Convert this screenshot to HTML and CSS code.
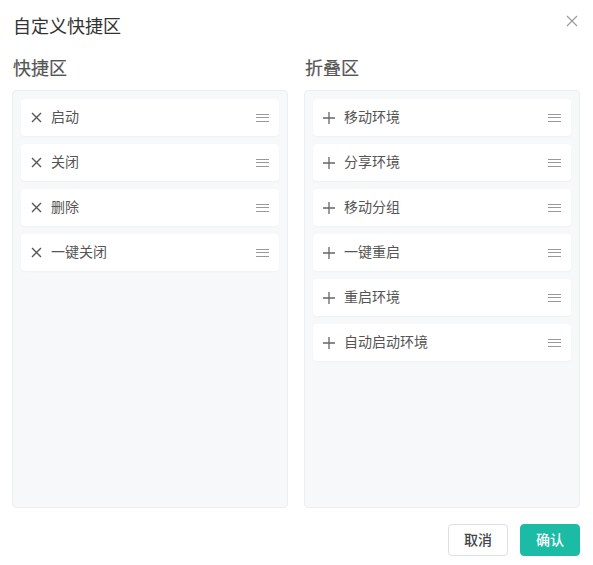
FILE: index.html
```html
<!DOCTYPE html>
<html lang="zh">
<head>
<meta charset="utf-8">
<link rel="stylesheet" href="styles.css">
</head>
<body>
<div class="modal">
  <div class="header">
    <div class="title">自定义快捷区</div>
    <svg class="close" width="12" height="12" viewBox="0 0 12 12"><path d="M1 1L11 11M11 1L1 11" stroke="#999" stroke-width="1.1" fill="none"/></svg>
  </div>
  <div class="columns">
    <div class="column">
      <div class="heading">快捷区</div>
      <div class="panel">
        <div class="item"><svg class="icon" width="11" height="11" viewBox="0 0 11 11"><path d="M1 1L10 10M10 1L1 10" stroke="#555" stroke-width="1.4" fill="none"/></svg><span class="label">启动</span><span class="drag"><i></i><i></i><i></i></span></div>
        <div class="item"><svg class="icon" width="11" height="11" viewBox="0 0 11 11"><path d="M1 1L10 10M10 1L1 10" stroke="#555" stroke-width="1.4" fill="none"/></svg><span class="label">关闭</span><span class="drag"><i></i><i></i><i></i></span></div>
        <div class="item"><svg class="icon" width="11" height="11" viewBox="0 0 11 11"><path d="M1 1L10 10M10 1L1 10" stroke="#555" stroke-width="1.4" fill="none"/></svg><span class="label">删除</span><span class="drag"><i></i><i></i><i></i></span></div>
        <div class="item"><svg class="icon" width="11" height="11" viewBox="0 0 11 11"><path d="M1 1L10 10M10 1L1 10" stroke="#555" stroke-width="1.4" fill="none"/></svg><span class="label">一键关闭</span><span class="drag"><i></i><i></i><i></i></span></div>
      </div>
    </div>
    <div class="column">
      <div class="heading">折叠区</div>
      <div class="panel">
        <div class="item"><svg class="icon" width="12" height="12" viewBox="0 0 12 12"><path d="M6 0V12M0 6H12" stroke="#666" stroke-width="1.3" fill="none"/></svg><span class="label">移动环境</span><span class="drag"><i></i><i></i><i></i></span></div>
        <div class="item"><svg class="icon" width="12" height="12" viewBox="0 0 12 12"><path d="M6 0V12M0 6H12" stroke="#666" stroke-width="1.3" fill="none"/></svg><span class="label">分享环境</span><span class="drag"><i></i><i></i><i></i></span></div>
        <div class="item"><svg class="icon" width="12" height="12" viewBox="0 0 12 12"><path d="M6 0V12M0 6H12" stroke="#666" stroke-width="1.3" fill="none"/></svg><span class="label">移动分组</span><span class="drag"><i></i><i></i><i></i></span></div>
        <div class="item"><svg class="icon" width="12" height="12" viewBox="0 0 12 12"><path d="M6 0V12M0 6H12" stroke="#666" stroke-width="1.3" fill="none"/></svg><span class="label">一键重启</span><span class="drag"><i></i><i></i><i></i></span></div>
        <div class="item"><svg class="icon" width="12" height="12" viewBox="0 0 12 12"><path d="M6 0V12M0 6H12" stroke="#666" stroke-width="1.3" fill="none"/></svg><span class="label">重启环境</span><span class="drag"><i></i><i></i><i></i></span></div>
        <div class="item"><svg class="icon" width="12" height="12" viewBox="0 0 12 12"><path d="M6 0V12M0 6H12" stroke="#666" stroke-width="1.3" fill="none"/></svg><span class="label">自动启动环境</span><span class="drag"><i></i><i></i><i></i></span></div>
      </div>
    </div>
  </div>
  <div class="footer">
    <button class="btn btn-cancel">取消</button>
    <button class="btn btn-ok">确认</button>
  </div>
</div>
</body>
</html>
```

FILE: styles.css
```css
* { box-sizing: border-box; }
html, body { margin: 0; padding: 0; background: #fff; }
body {
  font-family: "Noto Sans CJK SC", "Noto Sans", sans-serif;
  color: #333;
  width: 593px;
  height: 565px;
  overflow: hidden;
}
.modal {
  padding: 12px 13px 0 12px;
}
.header {
  display: flex;
  justify-content: space-between;
  align-items: flex-start;
  height: 26px;
}
.title {
  font-size: 18px;
  line-height: 26px;
  color: #333;
  padding-left: 1px;
}
.close {
  margin-top: 3px;
  margin-right: 2px;
}
.columns {
  display: flex;
  gap: 16px;
  margin-top: 16px;
}
.column {
  flex: 1;
  display: flex;
  flex-direction: column;
}
.heading {
  font-size: 18px;
  line-height: 26px;
  height: 26px;
  color: #555;
  font-weight: 400;
  padding-left: 1px;
  -webkit-text-stroke: 0.2px #555;
}
.panel {
  margin-top: 10px;
  height: 418px;
  background: #f7f8fa;
  border: 1px solid #eceef1;
  border-radius: 4px;
  padding: 8px;
  display: flex;
  flex-direction: column;
  gap: 8px;
}
.item {
  height: 37px;
  background: #fff;
  border-radius: 4px;
  display: flex;
  align-items: center;
  padding: 0 10px;
  box-shadow: 0 1px 2px rgba(0, 0, 0, 0.03);
}
.icon {
  flex: none;
  display: block;
}
.label {
  margin-left: 9px;
  font-size: 14px;
  line-height: 20px;
  padding-bottom: 3px;
  color: #555;
  flex: 1;
}
.drag {
  display: flex;
  flex-direction: column;
  gap: 2.5px;
  width: 13px;
}
.drag i {
  display: block;
  height: 1px;
  background: #999;
}
.footer {
  display: flex;
  justify-content: flex-end;
  gap: 12px;
  margin-top: 16px;
}
.btn {
  width: 60px;
  height: 32px;
  border-radius: 4px;
  font-family: "Noto Sans CJK SC", "Noto Sans", sans-serif;
  font-size: 14px;
  font-weight: 500;
  line-height: 20px;
  padding: 0 0 2px;
  cursor: pointer;
}
.btn-cancel {
  background: #fff;
  border: 1px solid #dcdfe6;
  color: #444;
}
.btn-ok {
  background: #1bbba6;
  border: 1px solid #1bbba6;
  color: #fff;
}
```
